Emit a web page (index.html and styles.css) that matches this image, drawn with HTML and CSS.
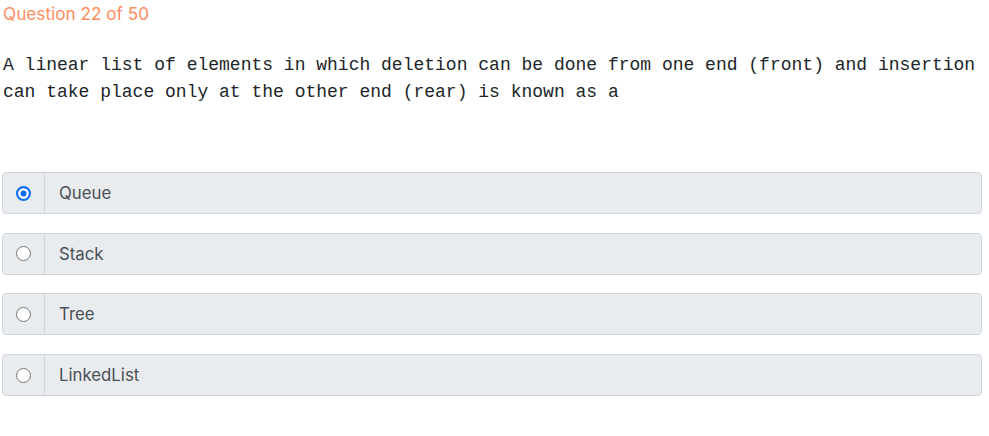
FILE: index.html
```html
<!DOCTYPE html>
<html>
<head>
<meta charset="utf-8">
<link rel="stylesheet" href="styles.css">
</head>
<body>
<div class="quiz">
  <div class="counter">Question 22 of 50</div>
  <div class="question">A linear list of elements in which deletion can be done from one end (front) and insertion can take place only at the other end (rear) is known as a</div>
  <div class="options">
    <div class="option">
      <div class="prepend"><span class="radio checked"></span></div>
      <div class="label">Queue</div>
    </div>
    <div class="option">
      <div class="prepend"><span class="radio"></span></div>
      <div class="label">Stack</div>
    </div>
    <div class="option">
      <div class="prepend"><span class="radio"></span></div>
      <div class="label">Tree</div>
    </div>
    <div class="option">
      <div class="prepend"><span class="radio"></span></div>
      <div class="label">LinkedList</div>
    </div>
  </div>
</div>
</body>
</html>
```
FILE: styles.css
```css
html, body {
  margin: 0;
  padding: 0;
  background: #fff;
}
.quiz {
  padding: 0 7px 0 2px;
  font-family: Inter, "Noto Sans", sans-serif;
}
.counter {
  color: #ff8c5f;
  font-size: 17.2px;
  line-height: 28px;
  padding-left: 1px;
}
.question {
  margin-top: 23.5px;
  font-family: "Liberation Mono", monospace;
  font-size: 18px;
  line-height: 27px;
  color: #212529;
  padding-left: 1px;
  width: 985px;
}
.options {
  margin-top: 66.5px;
  display: flex;
  flex-direction: column;
  gap: 18.7px;
}
.option {
  display: flex;
  height: 42px;
  box-sizing: border-box;
  border: 1px solid #ced4da;
  border-radius: 4px;
  background: #e9ecef;
  width: 980px;
}
.prepend {
  width: 41px;
  flex: none;
  border-right: 1px solid #ced4da;
  display: flex;
  align-items: center;
  justify-content: center;
}
.radio {
  width: 15px;
  height: 15px;
  box-sizing: border-box;
  border-radius: 50%;
  border: 1px solid #767676;
  background: #fff;
}
.radio.checked {
  border: 2px solid #0b6cf5;
  background: #0b6cf5;
  box-shadow: inset 0 0 0 2.5px #fff;
}
.label {
  display: flex;
  align-items: center;
  padding-left: 14px;
  font-size: 16.8px;
  color: #495057;
}
```
